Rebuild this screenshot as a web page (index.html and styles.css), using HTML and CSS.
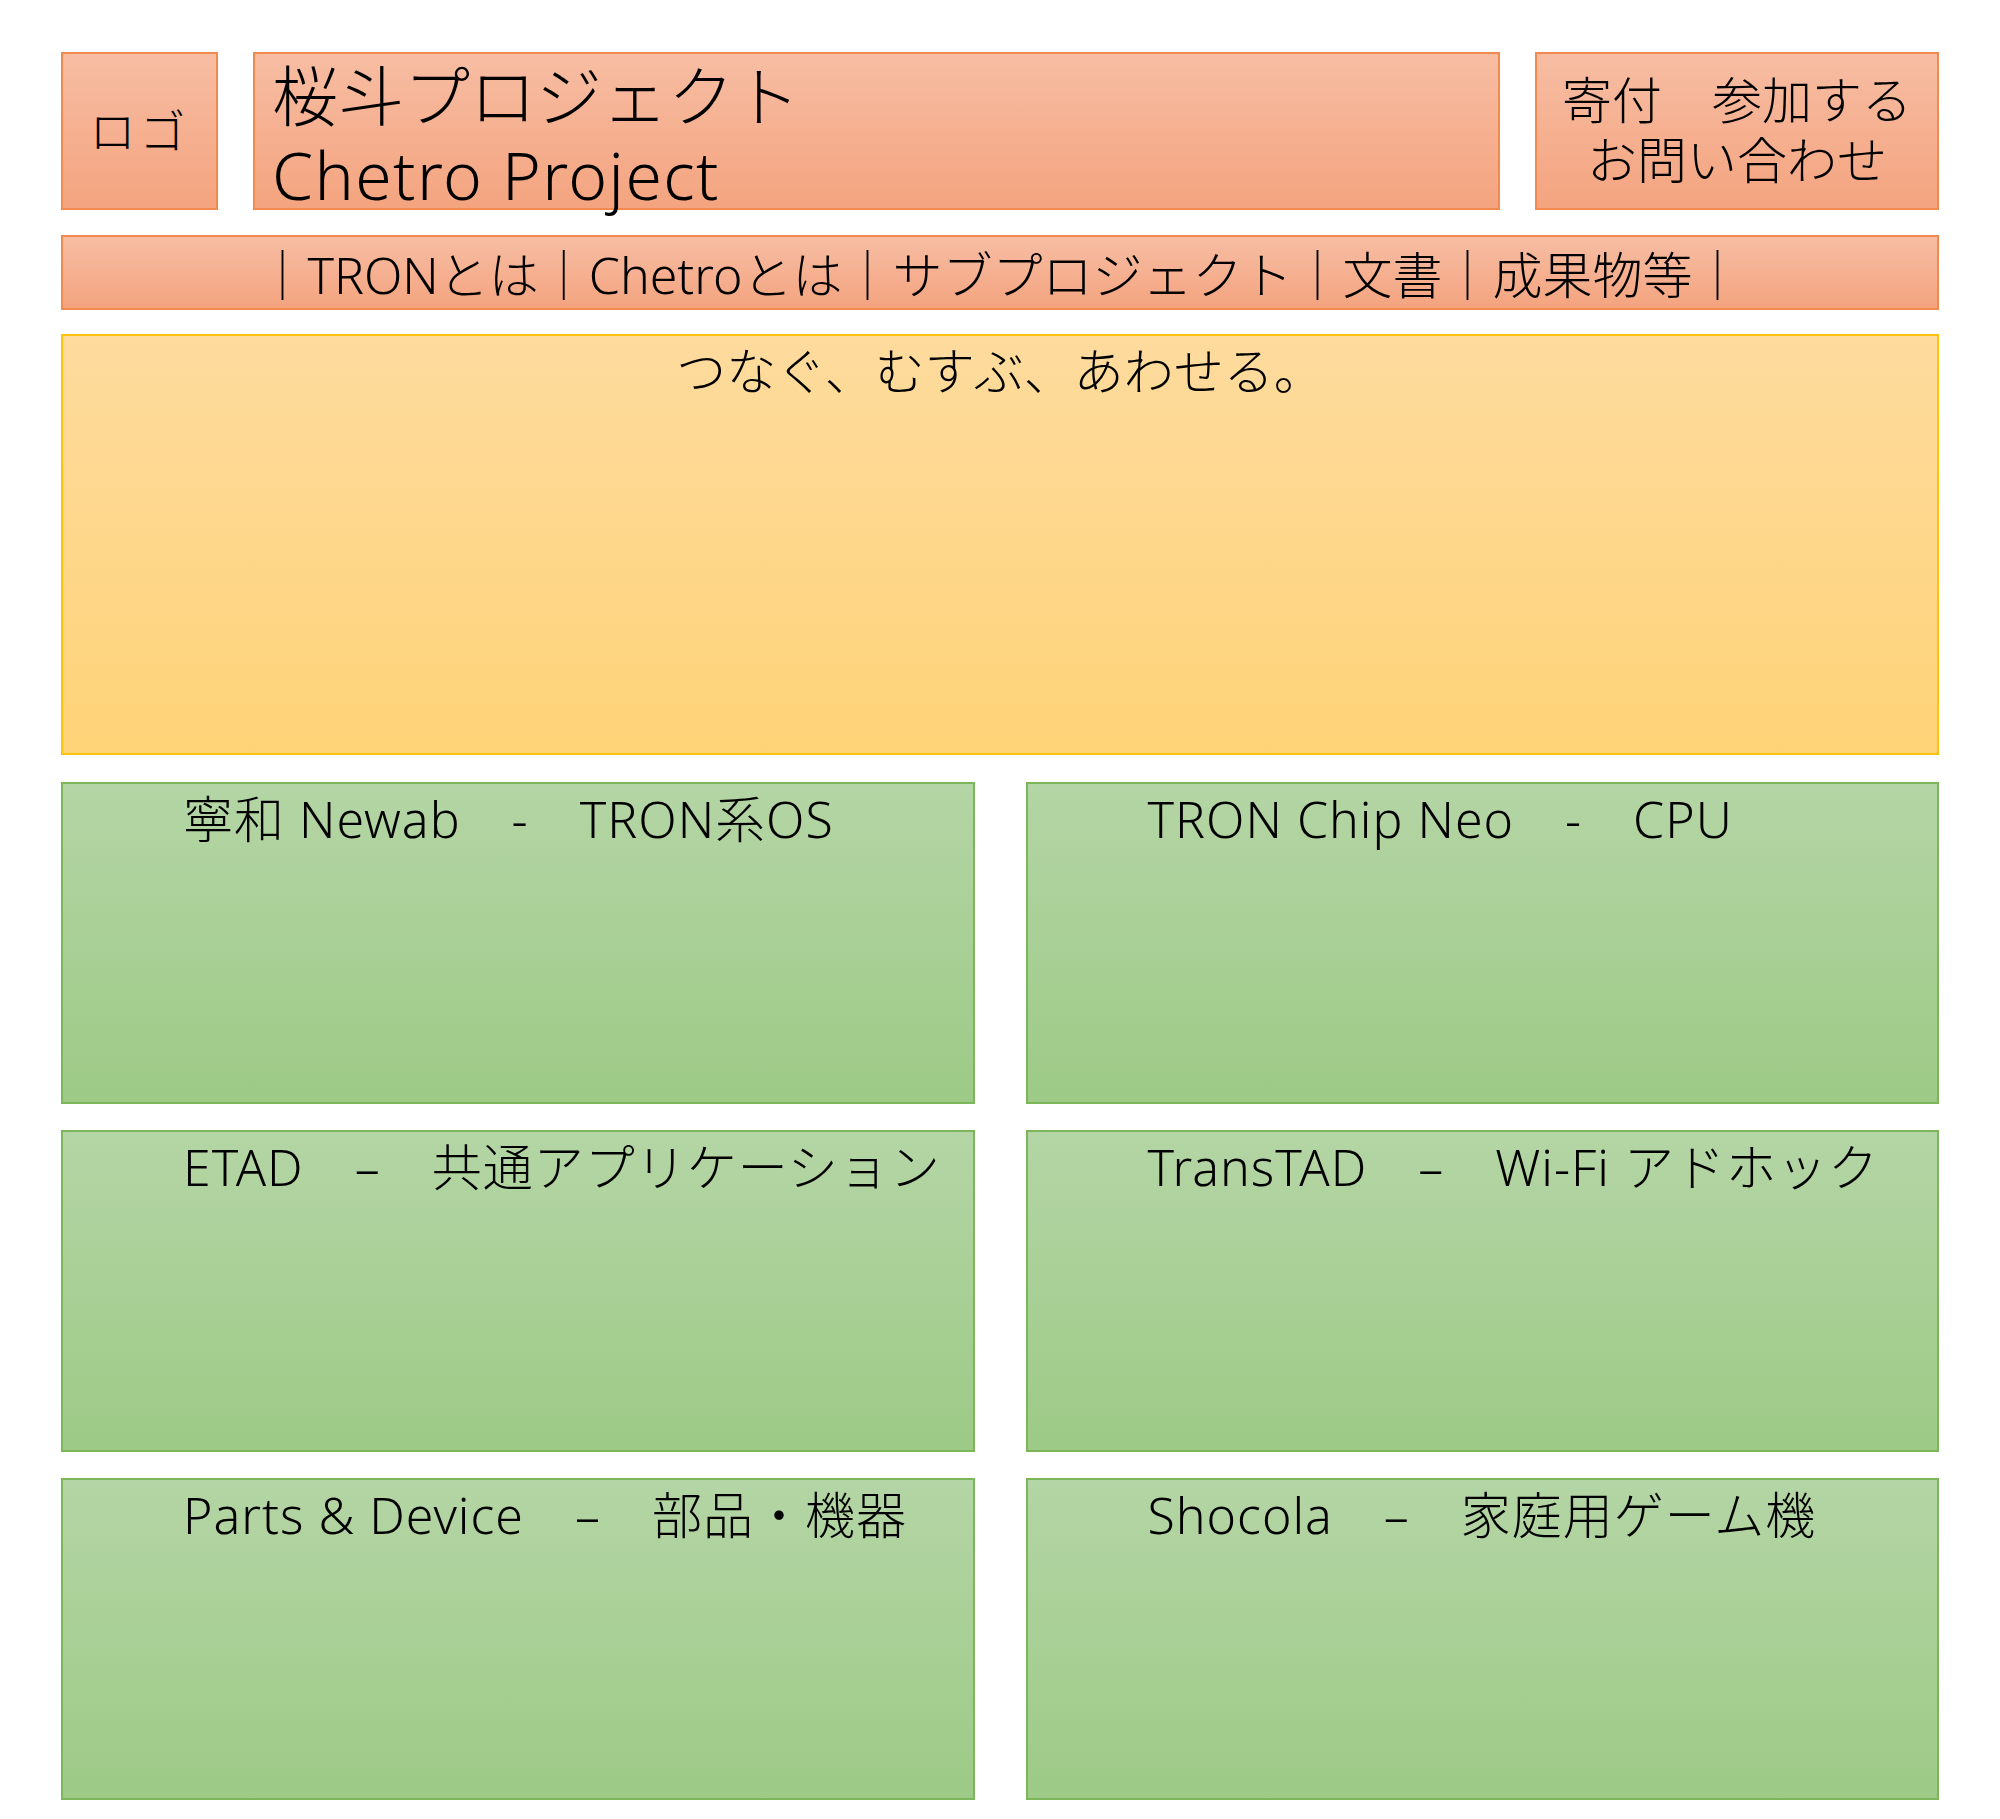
FILE: index.html
```html
<!DOCTYPE html>
<html lang="ja">
<head>
<meta charset="utf-8">
<title>桜斗プロジェクト Chetro Project</title>
<link rel="stylesheet" href="styles.css">
</head>
<body>
<div class="page">
  <header class="header">
    <div class="box orange logo">ロゴ</div>
    <div class="box orange title">
      <div class="title-line">桜斗プロジェクト</div>
      <div class="title-line title-latin">Chetro Project</div>
    </div>
    <div class="box orange actions">
      <div class="action-line">寄付　参加する</div>
      <div class="action-line">お問い合わせ</div>
    </div>
  </header>
  <nav class="box orange nav">｜TRONとは｜Chetroとは｜サブプロジェクト｜文書｜成果物等｜</nav>
  <section class="box yellow hero">つなぐ、むすぶ、あわせる。</section>
  <section class="cards">
    <div class="box green card">寧和 Newab　-　TRON系OS</div>
    <div class="box green card">TRON Chip Neo　-　CPU</div>
    <div class="box green card">ETAD　–　共通アプリケーション</div>
    <div class="box green card">TransTAD　–　Wi-Fi アドホック</div>
    <div class="box green card">Parts &amp; Device　–　部品・機器</div>
    <div class="box green card">Shocola　–　家庭用ゲーム機</div>
  </section>
</div>
</body>
</html>
```

FILE: styles.css
```css
* { box-sizing: border-box; }
html, body {
  margin: 0;
  padding: 0;
  background: #ffffff;
}
body {
  font-family: "Noto Sans", "Noto Sans CJK JP", sans-serif;
  font-weight: 300;
  color: #000;
}
.page {
  width: 2000px;
  padding: 52px 61px 0 61px;
}
.box {
  border: 2px solid;
}
.orange {
  border-color: #F08A4F;
  background: linear-gradient(#F7BDA3, #F4A47F);
}
.yellow {
  border-color: #FFC20F;
  background: linear-gradient(#FEDB9E, #FED377);
}
.green {
  border-color: #7DB65A;
  background: linear-gradient(#B4D5A5, #9DCA86);
}
.header {
  display: grid;
  grid-template-columns: 157px 1fr 404px;
  grid-template-rows: 158px;
  column-gap: 35px;
  height: 158px;
}
.logo {
  display: flex;
  align-items: center;
  justify-content: center;
  font-size: 46px;
  letter-spacing: 4px;
  padding-bottom: 6px;
}
.title {
  padding: 2px 0 0 17px;
  font-size: 66px;
  line-height: 79px;
  white-space: nowrap;
}
.title-latin {
  letter-spacing: 1.4px;
}
.actions {
  display: flex;
  flex-direction: column;
  justify-content: center;
  align-items: center;
  font-size: 50px;
  line-height: 60px;
  padding-bottom: 2px;
  white-space: nowrap;
}
.nav {
  margin-top: 25px;
  height: 75px;
  display: flex;
  align-items: center;
  justify-content: center;
  font-size: 50px;
  white-space: nowrap;
}
.hero {
  margin-top: 24px;
  height: 421px;
  padding-top: 4px;
  text-align: center;
  font-size: 50px;
  line-height: 62px;
}
.cards {
  margin-top: 27px;
  display: grid;
  grid-template-columns: 1fr 1fr;
  column-gap: 51px;
  row-gap: 26px;
}
.card {
  height: 322px;
  padding: 6px 0 0 120px;
  font-size: 50px;
  line-height: 58px;
  letter-spacing: 1px;
  white-space: nowrap;
}
```
